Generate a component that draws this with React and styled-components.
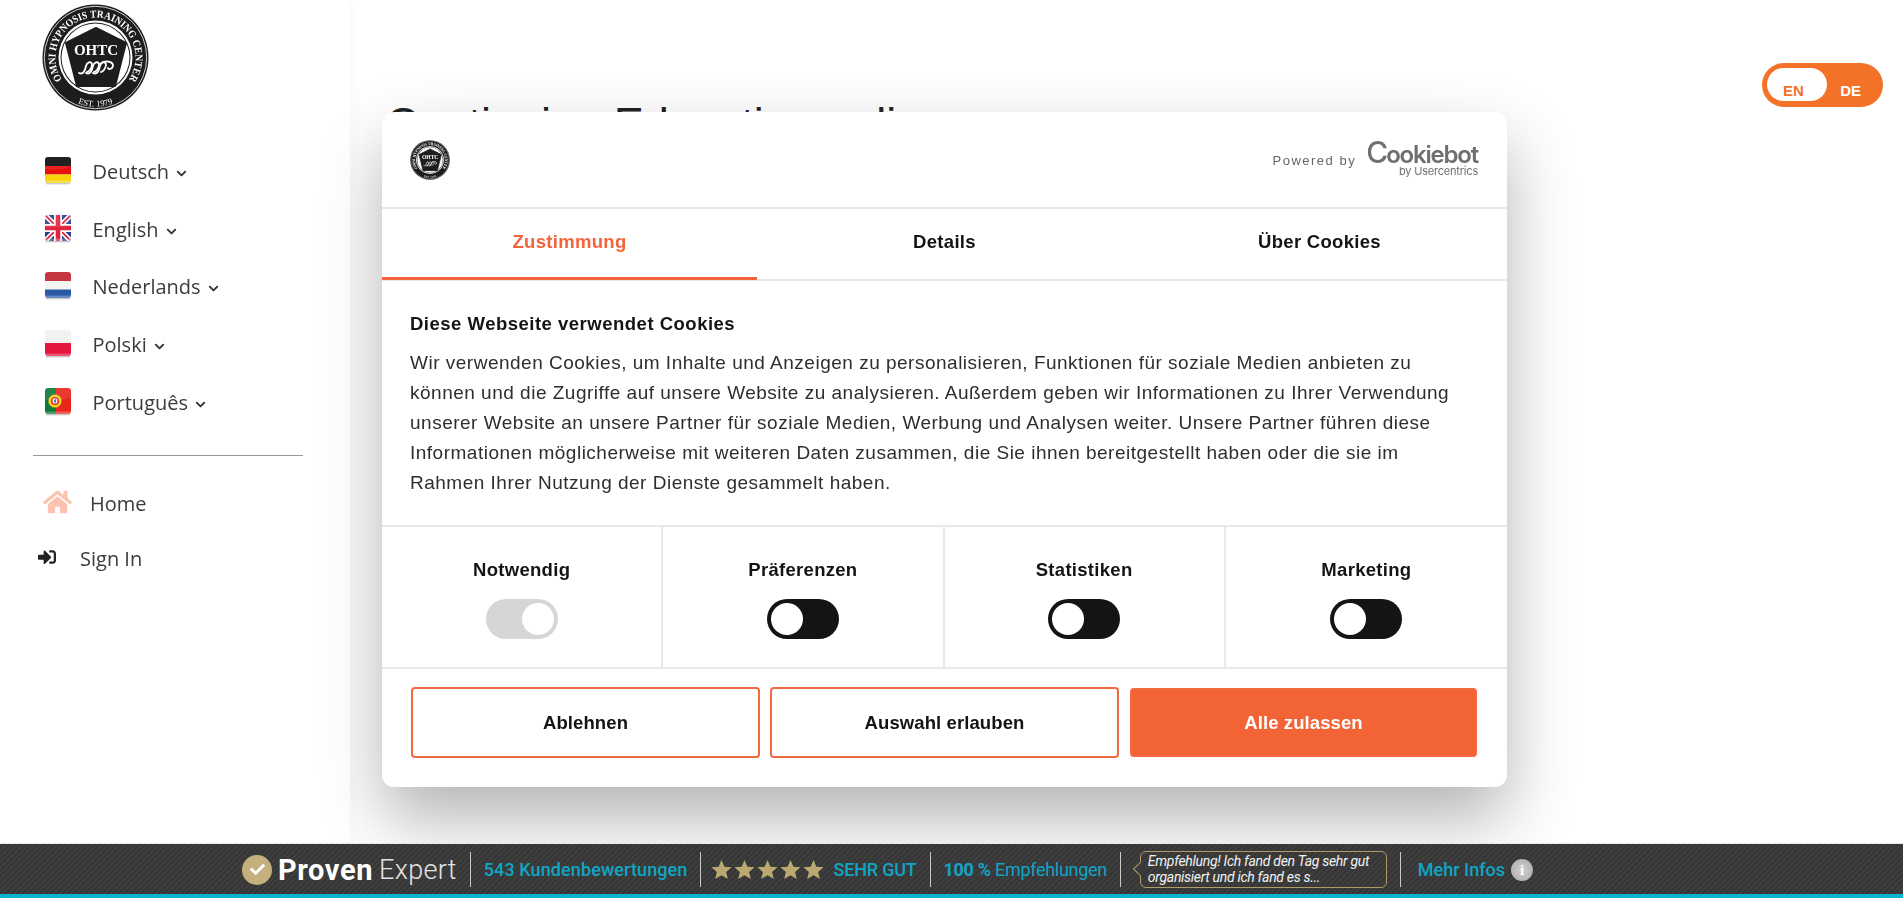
import React from 'react';
import styled, { createGlobalStyle } from 'styled-components';
import { ChevronDown } from 'lucide-react';
import { FaHome, FaSignInAlt, FaCheck } from 'react-icons/fa';

const Global = createGlobalStyle`
  html, body { margin: 0; padding: 0; height: 100%; overflow: hidden; background: #fff; }
  * { box-sizing: border-box; }
`;

const Page = styled.div`
  height: 898px;
  display: flex;
  flex-direction: column;
  font-family: "Open Sans", sans-serif;
`;
const Shell = styled.div`
  flex: 1;
  min-height: 0;
  display: flex;
`;
const Sidebar = styled.aside`
  position: relative;
  z-index: 20;
  width: 350px;
  flex: none;
  padding-top: 4px;
  background: rgba(255, 255, 255, 0.5);
  box-shadow: 4px 0 12px rgba(0, 0, 0, 0.025);
`;
const LogoSlot = styled.div`
  padding-left: 42px;
  height: 107px;
`;
const Nav = styled.nav`
  margin-top: 32px;
`;
const NavRow = styled.a`
  display: flex;
  align-items: center;
  height: 57.6px;
  padding-left: 45px;
  color: #3b3b3b;
  font-size: 20px;
`;
const Flag = styled.svg`
  width: 26px;
  height: 28px;
  flex: none;
  margin-right: 21.5px;
  margin-top: -1px;
`;
const Caret = styled(ChevronDown)`
  margin-left: 5px;
  margin-top: 4px;
  color: #333;
`;
const Divider = styled.hr`
  width: 270px;
  margin: 24px 0 0 33px;
  border: 0;
  border-top: 1px solid #999;
`;
const LinkRow = styled.a`
  display: flex;
  align-items: center;
  height: 36px;
  margin-top: ${p => p.$top}px;
  padding-left: ${p => p.$left}px;
  font-size: 20px;
  color: #3b3b3b;
`;
const HomeGlyph = styled(FaHome)`
  width: 29px;
  height: 26px;
  color: #fbc3b0;
  margin-right: 18px;
  margin-top: -3px;
`;
const SignGlyph = styled(FaSignInAlt)`
  width: 20px;
  height: 18px;
  color: #222;
  margin-right: 23px;
  margin-top: -4px;
`;

const Main = styled.main`
  flex: 1;
  min-width: 0;
  display: flex;
  justify-content: space-between;
  align-items: flex-start;
  padding: 63px 20px 0 36px;
`;
const Title = styled.h1`
  margin: 34px 0 0;
  font: 400 45px/54px "Liberation Sans", Arial, sans-serif;
  color: #222;
`;
const Lang = styled.div`
  position: relative;
  width: 121px;
  height: 44px;
  border-radius: 22px;
  background: #f47227;
  display: flex;
  justify-content: space-between;
  align-items: flex-end;
  padding: 0 22px 8px 21px;
  font: 700 15px/16px "Liberation Sans", Arial, sans-serif;
`;
const LangKnob = styled.span`
  position: absolute;
  left: 5px;
  top: 5px;
  width: 60px;
  height: 33px;
  border-radius: 17px;
  background: #fff;
`;
const LangText = styled.span`
  position: relative;
  color: ${p => (p.$on ? '#f47227' : '#fff')};
`;

const Dialog = styled.section`
  position: fixed;
  z-index: 10;
  left: 382px;
  top: 112px;
  width: 1125px;
  height: 675px;
  background: #fff;
  border-radius: 12px;
  box-shadow: 0 32px 68px rgba(0, 0, 0, 0.3);
  display: flex;
  flex-direction: column;
  font-family: "Liberation Sans", Arial, sans-serif;
  color: #141414;
`;
const DialogHeader = styled.header`
  height: 97px;
  flex: none;
  display: flex;
  justify-content: space-between;
  align-items: center;
  padding: 0 29px 0 28px;
  border-bottom: 2px solid #e8e8e8;
`;
const Powered = styled.div`
  display: flex;
  align-items: center;
  gap: 10px;
`;
const PoweredLabel = styled.span`
  font-size: 13px;
  letter-spacing: 1.5px;
  color: #666;
  margin-top: 2px;
`;
const Brand = styled.div`
  display: flex;
  flex-direction: column;
  align-items: flex-end;
  margin-top: -1px;
  color: #6f6f6f;
  font-family: Inter, sans-serif;
`;
const BrandName = styled.span`
  font-size: 24px;
  line-height: 22px;
  font-weight: 600;
  letter-spacing: -1.2px;
`;
const BrandInitial = styled.span`
  font-size: 30px;
  font-weight: 500;
  letter-spacing: -2px;
`;
const BrandSub = styled.span`
  font-size: 11px;
  line-height: 11px;
  letter-spacing: -0.2px;
`;
const Tabs = styled.div`
  height: 72px;
  flex: none;
  display: grid;
  grid-template-columns: repeat(3, 1fr);
  border-bottom: 2px solid #e8e8e8;
`;
const Tab = styled.button`
  all: unset;
  text-align: center;
  font-size: 18.5px;
  font-weight: 700;
  letter-spacing: 0.3px;
  padding-bottom: 5px;
  color: ${p => (p.$active ? '#f4633a' : '#141414')};
  box-shadow: ${p => (p.$active ? 'inset 0 -3px 0 #f4633a' : 'none')};
  margin-bottom: -1px;
`;
const Body = styled.div`
  height: 246px;
  flex: none;
  padding: 29px 28px 0;
  border-bottom: 2px solid #e8e8e8;
`;
const BodyTitle = styled.h2`
  margin: 0 0 10px;
  font-size: 18.5px;
  line-height: 28px;
  font-weight: 700;
  letter-spacing: 0.5px;
`;
const BodyText = styled.p`
  margin: 0;
  font-size: 19px;
  line-height: 30px;
  letter-spacing: 0.5px;
  color: #2e2e2e;
  white-space: nowrap;
`;
const Consent = styled.div`
  height: 142px;
  flex: none;
  display: grid;
  grid-template-columns: repeat(4, 1fr);
  border-bottom: 2px solid #e8e8e8;
`;
const ConsentCell = styled.div`
  display: flex;
  flex-direction: column;
  align-items: center;
  padding-top: 30px;
  border-right: ${p => (p.$last ? '0' : '2px solid #e8e8e8')};
  font-size: 18.5px;
  font-weight: 700;
  line-height: 26px;
  letter-spacing: 0.3px;
`;
const Switch = styled.span`
  margin-top: 16px;
  width: 72px;
  height: 40px;
  border-radius: 20px;
  padding: 4px;
  display: flex;
  justify-content: ${p => (p.$disabled ? 'flex-end' : 'flex-start')};
  background: ${p => (p.$disabled ? '#d6d6d6' : '#141414')};
`;
const Knob = styled.span`
  width: 32px;
  height: 32px;
  border-radius: 50%;
  background: #fff;
`;
const Actions = styled.div`
  flex: 1;
  display: grid;
  grid-template-columns: repeat(3, 1fr);
  gap: 10px;
  padding: 18px 29px 29px;
`;
const Action = styled.button`
  border: 2px solid #f26a40;
  border-radius: 4px;
  background: ${p => (p.$solid ? '#f26436' : '#fff')};
  color: ${p => (p.$solid ? '#fff' : '#141414')};
  margin: ${p => (p.$solid ? '1px' : '0')};
  font: 700 18.5px "Liberation Sans", Arial, sans-serif;
  letter-spacing: 0.1px;
`;

const Bar = styled.footer`
  position: relative;
  z-index: 30;
  height: 55px;
  flex: none;
  display: flex;
  align-items: center;
  gap: 13px;
  padding: 1px 0 0 242px;
  border-top: 1px solid #eaeaea;
  border-bottom: 4px solid #0db2cd;
  background: repeating-linear-gradient(135deg, #3e3e3e 0 2px, #363636 2px 4px);
  font-family: Roboto, sans-serif;
  color: #10a5c5;
  font-size: 18px;
`;
const Sep = styled.span`
  width: 1px;
  height: 35px;
  background: #c9c9c9;
  flex: none;
`;
const Proven = styled.div`
  display: flex;
  align-items: center;
  color: #fff;
  font-size: 29px;
  line-height: 34px;
`;
const CheckDisc = styled.span`
  width: 30px;
  height: 30px;
  border-radius: 50%;
  background: #c4b07c;
  display: flex;
  align-items: center;
  justify-content: center;
  margin-right: 6px;
  color: #fff;
  font-size: 15px;
`;
const ProvenBold = styled.b`
  font-weight: 700;
  letter-spacing: 0.6px;
  margin-right: 6px;
`;
const ProvenLight = styled.span`
  font-weight: 300;
  font-size: 27px;
  letter-spacing: 0.3px;
  color: #e4e4e4;
`;
const Metric = styled.span`
  font-weight: ${p => (p.$bold ? 500 : 400)};
  letter-spacing: ${p => p.$spacing || 0}px;
  white-space: nowrap;
`;
const Stars = styled.div`
  display: flex;
  color: #bca96f;
  margin: 0 -5px 0 -4px;
`;
const Star = styled.svg`
  width: 23px;
  height: 23px;
  fill: currentColor;
`;
const Quote = styled.div`
  position: relative;
  margin-left: 6px;
  width: 247px;
  height: 37px;
  padding: 2px 0 0 7px;
  border: 1.5px solid #ad9b69;
  border-radius: 6px;
  color: #f2f2f2;
  font: italic 400 14px/15.5px Roboto, sans-serif;
  letter-spacing: -0.3px;
  white-space: nowrap;
  &::before {
    content: '';
    position: absolute;
    left: -6px;
    top: 12px;
    width: 9px;
    height: 9px;
    background: #3a3a3a;
    border-left: 1.5px solid #ad9b69;
    border-bottom: 1.5px solid #ad9b69;
    transform: rotate(45deg);
  }
`;
const More = styled.div`
  display: flex;
  align-items: center;
  gap: 6px;
  margin-left: 4px;
  font-weight: 500;
  white-space: nowrap;
`;
const Info = styled.span`
  width: 22px;
  height: 22px;
  border-radius: 50%;
  background: radial-gradient(circle at 50% 50%, #d0d0d0, #a9a9a9);
  color: #fff;
  font: 700 15px/22px "Liberation Serif", serif;
  text-align: center;
`;

function Logo({ size, id }) {
  return (
    <svg width={size} height={size} viewBox="0 0 107 107" role="img" aria-label="OHTC logo">
      <defs>
        <path id={`${id}-top`} d="M 21.6 77.6 A 40 40 0 1 1 85.4 77.6" />
        <path id={`${id}-bot`} d="M 29 96 A 49 49 0 0 0 78 96" />
      </defs>
      <circle cx="53.5" cy="53.5" r="53" fill="#1d1d1b" />
      <circle cx="53.5" cy="53.5" r="51.2" fill="none" stroke="#fff" strokeWidth="0.8" />
      <circle cx="53.5" cy="53.5" r="37" fill="#fff" />
      <circle cx="53.5" cy="53.5" r="35" fill="#1d1d1b" />
      <circle cx="53.5" cy="53.5" r="34" fill="#fff" />
      <path d="M54 24 L84 39 L73 82 H35 L24 39 Z" fill="#1d1d1b" stroke="#1d1d1b" strokeWidth="2" strokeLinejoin="round" />
      <text fontFamily="'Liberation Serif', serif" fontWeight="700" fontSize="10.5" fill="#fff">
        <textPath href={`#${id}-top`} startOffset="50%" textAnchor="middle" textLength="172" lengthAdjust="spacingAndGlyphs">OMNI HYPNOSIS TRAINING CENTER</textPath>
      </text>
      <text fontFamily="'Liberation Serif', serif" fontSize="8.5" fill="#fff">
        <textPath href={`#${id}-bot`} startOffset="50%" textAnchor="middle">EST. 1979</textPath>
      </text>
      <text x="54" y="51" textAnchor="middle" fontFamily="'Liberation Serif', serif" fontWeight="700" fontSize="15" fill="#fff">OHTC</text>
      <g fill="none" stroke="#fff" strokeWidth="1.8" strokeLinecap="round">
        <path d="M37 69 C41 71 43 67 44 62 C45 58 49 57 50 60 C50 64 47 68 45 68" />
        <path d="M44 69 C48 71 50 67 51 62 C52 58 56 57 57 60 C57 64 54 68 52 68" />
        <path d="M51 69 C55 71 57 67 58 62 C59 58 63 57 64 60 C64 64 61 68 59 68" />
        <path d="M58 60 C62 56 70 57 71 61 C71 65 67 66 66 64" />
      </g>
    </svg>
  );
}

function FlagShape({ id, children }) {
  return (
    <Flag viewBox="0 0 26 28">
      <defs>
        <clipPath id={`${id}-c`}><rect x="0" y="0" width="26" height="26" rx="3" /></clipPath>
        <linearGradient id={`${id}-s`} x1="0" x2="0" y1="0" y2="1">
          <stop offset="0" stopColor="#000" stopOpacity="0.35" />
          <stop offset="1" stopColor="#000" stopOpacity="0" />
        </linearGradient>
      </defs>
      <rect x="1" y="25.5" width="24" height="2.5" fill={`url(#${id}-s)`} />
      <g clipPath={`url(#${id}-c)`}>
        {children}
        <path d="M0 0 H26 V9 C18 13 8 13 0 12 Z" fill="#fff" opacity="0.09" />
        <rect y="23.6" width="26" height="2.4" fill="#fff" opacity="0.28" />
      </g>
    </Flag>
  );
}

const flags = {
  de: (
    <>
      <rect width="26" height="9" fill="#0c0c0c" />
      <rect y="9" width="26" height="8.5" fill="#e8100f" />
      <rect y="17.5" width="26" height="8.5" fill="#f6d30b" />
    </>
  ),
  en: (
    <>
      <rect width="26" height="26" fill="#2b3f8f" />
      <path d="M0 0 L26 26 M26 0 L0 26" stroke="#fff" strokeWidth="5" />
      <path d="M0 0 L26 26 M26 0 L0 26" stroke="#d8243c" strokeWidth="1.8" />
      <path d="M13 0 V26 M0 13 H26" stroke="#fff" strokeWidth="8" />
      <path d="M13 0 V26 M0 13 H26" stroke="#e0243c" strokeWidth="4.6" />
    </>
  ),
  nl: (
    <>
      <rect width="26" height="9" fill="#c2242f" />
      <rect y="9" width="26" height="8.5" fill="#f5f5f3" />
      <rect y="17.5" width="26" height="8.5" fill="#2a5aa5" />
    </>
  ),
  pl: (
    <>
      <rect width="26" height="13" fill="#f1f1ef" />
      <rect y="13" width="26" height="13" fill="#e4173f" />
    </>
  ),
  pt: (
    <>
      <rect width="11" height="26" fill="#0d7a3a" />
      <rect x="11" width="15" height="26" fill="#e8271c" />
      <circle cx="10" cy="13" r="6.6" fill="#f4d21f" stroke="#b08d1a" strokeWidth="0.5" />
      <circle cx="10" cy="13" r="4" fill="#d7281f" />
      <rect x="7.7" y="10.4" width="4.6" height="5.2" rx="1.4" fill="#fff" />
      <rect x="9.2" y="11.4" width="1.6" height="3.2" fill="#2b4fa0" />
    </>
  ),
};

const languages = [
  { id: 'de', label: 'Deutsch' },
  { id: 'en', label: 'English' },
  { id: 'nl', label: 'Nederlands' },
  { id: 'pl', label: 'Polski' },
  { id: 'pt', label: 'Português' },
];

const bodyLines = [
  'Wir verwenden Cookies, um Inhalte und Anzeigen zu personalisieren, Funktionen für soziale Medien anbieten zu',
  'können und die Zugriffe auf unsere Website zu analysieren. Außerdem geben wir Informationen zu Ihrer Verwendung',
  'unserer Website an unsere Partner für soziale Medien, Werbung und Analysen weiter. Unsere Partner führen diese',
  'Informationen möglicherweise mit weiteren Daten zusammen, die Sie ihnen bereitgestellt haben oder die sie im',
  'Rahmen Ihrer Nutzung der Dienste gesammelt haben.',
];

const consent = [
  { label: 'Notwendig', disabled: true },
  { label: 'Präferenzen' },
  { label: 'Statistiken' },
  { label: 'Marketing' },
];

export default function App() {
  return (
    <Page>
      <Global />
      <Shell>
        <Sidebar>
          <LogoSlot><Logo size={107} id="logo-main" /></LogoSlot>
          <Nav>
            {languages.map(l => (
              <NavRow key={l.id}>
                <FlagShape id={l.id}>{flags[l.id]}</FlagShape>
                {l.label}
                <Caret size={15} strokeWidth={3} />
              </NavRow>
            ))}
          </Nav>
          <Divider />
          <LinkRow $top={30} $left={43}><HomeGlyph />Home</LinkRow>
          <LinkRow $top={19} $left={37}><SignGlyph />Sign In</LinkRow>
        </Sidebar>
        <Main>
          <Title>Continuing Education online</Title>
          <Lang>
            <LangKnob />
            <LangText $on>EN</LangText>
            <LangText>DE</LangText>
          </Lang>
        </Main>
      </Shell>

      <Dialog>
        <DialogHeader>
          <Logo size={40} id="logo-small" />
          <Powered>
            <PoweredLabel>Powered by</PoweredLabel>
            <Brand>
              <BrandName><BrandInitial>C</BrandInitial>ookiebot</BrandName>
              <BrandSub>by Usercentrics</BrandSub>
            </Brand>
          </Powered>
        </DialogHeader>
        <Tabs>
          <Tab $active>Zustimmung</Tab>
          <Tab>Details</Tab>
          <Tab>Über Cookies</Tab>
        </Tabs>
        <Body>
          <BodyTitle>Diese Webseite verwendet Cookies</BodyTitle>
          <BodyText>
            {bodyLines.map(line => (
              <React.Fragment key={line}>{line}<br /></React.Fragment>
            ))}
          </BodyText>
        </Body>
        <Consent>
          {consent.map((c, i) => (
            <ConsentCell key={c.label} $last={i === consent.length - 1}>
              {c.label}
              <Switch $disabled={c.disabled}><Knob /></Switch>
            </ConsentCell>
          ))}
        </Consent>
        <Actions>
          <Action>Ablehnen</Action>
          <Action>Auswahl erlauben</Action>
          <Action $solid>Alle zulassen</Action>
        </Actions>
      </Dialog>

      <Bar>
        <Proven>
          <CheckDisc><FaCheck /></CheckDisc>
          <ProvenBold>Proven</ProvenBold>
          <ProvenLight>Expert</ProvenLight>
        </Proven>
        <Sep />
        <Metric $bold $spacing={0.1}>543 Kundenbewertungen</Metric>
        <Sep />
        <Stars>
          {[0, 1, 2, 3, 4].map(i => (
            <Star key={i} viewBox="0 0 24 24">
              <path d="M12 2l3 7 7.5.6-5.7 4.9 1.8 7.4L12 18l-6.6 3.9 1.8-7.4L1.5 9.6 9 9z" />
            </Star>
          ))}
        </Stars>
        <Metric $bold $spacing={-0.2}>SEHR GUT</Metric>
        <Sep />
        <Metric $spacing={-0.3}><b>100 %</b> Empfehlungen</Metric>
        <Sep />
        <Quote>Empfehlung! Ich fand den Tag sehr gut<br />organisiert und ich fand es s...</Quote>
        <Sep />
        <More>Mehr Infos<Info>i</Info></More>
      </Bar>
    </Page>
  );
}
